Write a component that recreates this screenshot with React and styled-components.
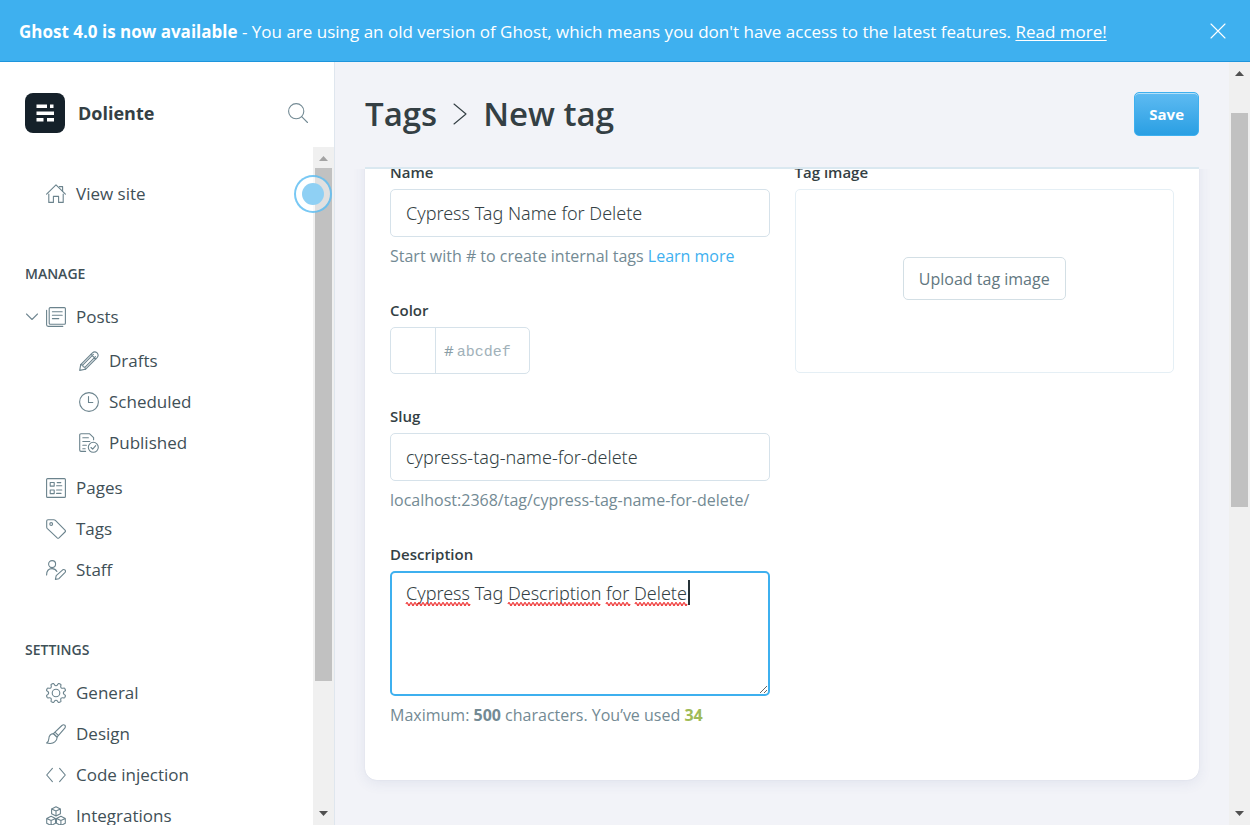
import React, { useLayoutEffect, useRef } from "react";
import styled, { createGlobalStyle, css } from "styled-components";

const color = {
  blue: "#3eb0ef",
  ink: "#343f44",
  text: "#3f5057",
  muted: "#738a94",
  line: "#d6e2ea",
  page: "#f2f3f8",
};

const GlobalStyle = createGlobalStyle`
  *, *::before, *::after { box-sizing: border-box; }
  html, body, #root { height: 100%; }
  body {
    margin: 0;
    overflow: hidden;
    font-family: "Open Sans", "Noto Sans", sans-serif;
    color: ${color.ink};
    background: ${color.page};
  }
  button, input, textarea { font-family: inherit; }
`;

const Shell = styled.div`
  display: flex;
  flex-direction: column;
  height: 100vh;
`;

const Banner = styled.aside`
  display: flex;
  align-items: center;
  justify-content: space-between;
  flex: none;
  height: 62px;
  padding: 0 24px 0 19px;
  background: ${color.blue};
  border-bottom: 1px solid #1e95dc;
  color: #fff;
  font-size: 17px;
  line-height: 24px;

  p { margin: 0; padding-top: 2px; }
  b { font-weight: 700; }
  a { color: inherit; text-underline-offset: 2px; }
`;

const IconButton = styled.button`
  display: flex;
  padding: 0;
  border: 0;
  background: none;
  color: inherit;
  cursor: pointer;
`;

const Body = styled.div`
  display: flex;
  flex: 1;
  min-height: 0;
`;

const Sidebar = styled.nav`
  display: flex;
  flex-direction: column;
  flex: none;
  width: 335px;
  background: #fff;
  border-right: 1px solid #dfe6ee;
`;

const SiteHeader = styled.header`
  display: flex;
  align-items: center;
  flex: none;
  gap: 13px;
  height: 85px;
  padding: 20px 26px 3px 25px;
  color: ${color.muted};
`;

const Logo = styled.svg`
  flex: none;
  width: 40px;
  height: 40px;
`;

const SiteName = styled.strong`
  flex: 1;
  color: ${color.ink};
  font-size: 18px;
  font-weight: 700;
`;

const NavScroller = styled.div`
  position: relative;
  display: flex;
  flex: 1;
  min-height: 0;
`;

const NavContent = styled.div`
  flex: 1;
  min-width: 0;
  overflow: hidden;
  padding: 26px 0 0 25px;
`;

const NavHeading = styled.h2`
  margin: 52px 0 14px;
  color: ${color.text};
  font-size: 14px;
  line-height: 16px;
  font-weight: 600;
  text-transform: uppercase;
`;

const NavList = styled.ul`
  list-style: none;
  margin: 0;
  padding: 0;

  & & {
    padding: 3px 0 4px 33px;
  }
`;

const NavRow = styled.div`
  display: flex;
  align-items: center;
  height: 41px;
`;

const Toggle = styled(IconButton)`
  width: 14px;
  margin-right: -14px;
  color: ${color.muted};
`;

const NavLink = styled.a`
  display: flex;
  align-items: center;
  gap: 10px;
  padding-left: 21px;
  color: ${color.text};
  font-size: 17px;
  line-height: 24px;
  text-decoration: none;

  svg { color: #6b838d; }
`;

const Icon = styled.svg`
  flex: none;
  width: ${(p) => p.$size || 20}px;
  height: ${(p) => p.$height || p.$size || 20}px;
  fill: none;
  stroke: currentColor;
  stroke-width: 1.1;
  stroke-linecap: round;
  stroke-linejoin: round;
`;

const Track = styled.div`
  display: flex;
  flex-direction: column;
  flex: none;
  width: 21px;
  padding: 0 2px;
  background: #f0f0f0;
`;

const Arrow = styled.svg`
  flex: none;
  width: 17px;
  height: 21px;
  fill: ${(p) => (p.$dim ? "#a3a3a3" : "#505050")};
`;

const Thumb = styled.div`
  flex: ${(p) => p.$size};
  background: #c1c1c1;
`;

const Gap = styled.div`
  flex: ${(p) => p.$size};
`;

const ClickMarker = styled.span`
  position: absolute;
  top: 28px;
  right: 2px;
  width: 38px;
  height: 38px;
  border: 2px solid rgba(62, 176, 239, 0.7);
  border-radius: 50%;
  background: rgba(255, 255, 255, 0.5);

  &::after {
    content: "";
    position: absolute;
    inset: 6px;
    border-radius: 50%;
    background: #8fd0f4;
  }
`;

const Main = styled.main`
  display: flex;
  flex-direction: column;
  flex: 1;
  min-width: 0;
`;

const PageHeader = styled.header`
  display: flex;
  align-items: center;
  justify-content: space-between;
  flex: none;
  height: 107px;
  margin: 0 30px;
  padding-bottom: 2px;
  border-bottom: 2px solid #dae8f0;
`;

const Title = styled.h1`
  display: flex;
  align-items: center;
  gap: 16px;
  margin: 0;
  font-size: 33px;
  line-height: 44px;
  font-weight: 600;

  a { color: inherit; text-decoration: none; }
`;

const SaveButton = styled.button`
  height: 44px;
  padding: 0 14px;
  border: 1px solid ${color.blue};
  border-radius: 5px;
  background: linear-gradient(#5ebbf2, #2a9fe3);
  box-shadow: inset 0 1px 0 #b4e0f9;
  color: #fff;
  font-size: 15px;
  font-weight: 700;
`;

const Scroller = styled.div`
  flex: 1;
  min-height: 0;
  padding: 0 30px;
  overflow-y: auto;
  scrollbar-width: none;
`;

const Card = styled.form`
  display: grid;
  grid-template-columns: 1fr 1fr;
  align-items: start;
  column-gap: 25px;
  padding: 25px 25px 21px;
  margin-bottom: 48px;
  border-radius: 12px;
  background: #fff;
  box-shadow: 0 0 1px rgba(60, 80, 130, 0.2), 0 3px 14px rgba(60, 80, 130, 0.09);
`;

const Field = styled.div`
  margin-bottom: 32px;
`;

const Label = styled.label`
  display: block;
  margin-bottom: 7px;
  font-size: 15px;
  line-height: 20px;
  font-weight: 600;
`;

const Hint = styled.p`
  margin: 8px 0 0;
  padding-bottom: 1px;
  color: ${color.muted};
  font-size: 16px;
  line-height: 22px;

  a { color: ${color.blue}; text-decoration: none; }
`;

const Count = styled.b`
  color: ${(p) => (p.$ok ? "#9fbb58" : "inherit")};
`;

const control = css`
  display: block;
  width: 100%;
  border: 1px solid ${color.line};
  border-radius: 5px;
  background: #fff;
  color: ${color.ink};
  font-family: "Noto Sans", "Open Sans", sans-serif;
  font-size: 18px;
  font-weight: 300;
  outline: 0;
`;

const TextInput = styled.input`
  ${control}
  height: 48px;
  padding: 0 15px;
`;

const TextAreaWrap = styled.div`
  position: relative;
`;

const TextArea = styled.textarea`
  ${control}
  height: 125px;
  padding: 8px 14px;
  border: 2px solid ${color.blue};
  line-height: 25px;
  resize: vertical;
`;

const SpellMarks = styled.svg`
  position: absolute;
  inset: 0;
  width: 100%;
  height: 100%;
  pointer-events: none;
`;

const ColorControl = styled.div`
  display: flex;
  width: 140px;
  height: 47px;
  overflow: hidden;
  border: 1px solid ${color.line};
  border-radius: 5px;
  color: #8a9da6;
  font-size: 15px;
  line-height: 45px;
`;

const Swatch = styled.span`
  width: 45px;
  margin-right: 8px;
  border-right: 1px solid ${color.line};
`;

const ColorInput = styled.input`
  flex: 1;
  min-width: 0;
  padding: 3px 0 0 3px;
  border: 0;
  outline: 0;
  background: none;
  font-family: "Liberation Mono", monospace;
  font-size: 15px;

  &::placeholder { color: #a1b1b9; opacity: 1; }
`;

const ImageDrop = styled.div`
  display: flex;
  align-items: center;
  justify-content: center;
  height: 184px;
  padding-bottom: 5px;
  border: 1px solid #e5eff5;
  border-radius: 5px;
`;

const UploadButton = styled.button`
  height: 43px;
  padding: 0 15px;
  border: 1px solid #d3dfe5;
  border-radius: 5px;
  background: #fff;
  color: #62777f;
  font-size: 16px;
`;

function gearPath() {
  const at = (deg, r) => {
    const a = (deg * Math.PI) / 180;
    return `${(10 + r * Math.cos(a)).toFixed(2)} ${(10 + r * Math.sin(a)).toFixed(2)}`;
  };
  let d = "";
  for (let k = 0; k < 8; k++) {
    const c = 22.5 + 45 * k;
    d += `${k ? "L" : "M"}${at(c - 11, 8.6)}Q${at(c - 10, 9.9)} ${at(c - 5, 9.9)}L${at(c + 5, 9.9)}`;
    d += `Q${at(c + 10, 9.9)} ${at(c + 11, 8.6)}Q${at(c + 22.5, 6.2)} ${at(c + 34, 8.6)}`;
  }
  return `${d}z`;
}

const icons = {
  home: (
    <>
      <path d="M.6 10.2 10 .9l9.400 9.300" />
      <path d="M2.800 10v8.400h4.600v-6h5.200v6h4.600V10" />
      <path d="M13.400 2.600h3.200v4.600" />
    </>
  ),
  posts: (
    <>
      <rect x="3.200" y=".6" width="16.200" height="16.600" rx="1" />
      <path d="M.6 3.200v14.600q0 1.600 1.600 1.600h14.600M6.400 4.800h9.800M6.400 8.200h9.800M6.400 11.600h6.400" />
    </>
  ),
  draft: (
    <>
      <path d="M1.700 13.600 13.400 1.900q2.200-2.100 4.700 0 2.100 2.400 0 4.700L6.400 18.300.7 19.400z" />
      <path d="m1.700 13.600 2 .5.5 1.700 1.700.5.5 2M3.700 14.100 14.400 3.400M5.900 16.300 16.500 5.700M12 3.300 16.700 8" />
    </>
  ),
  clock: (
    <>
      <circle cx="10" cy="10" r="9.400" />
      <path d="M9.500 4.500v6h4.300" />
    </>
  ),
  published: (
    <>
      <path d="M6.600 18.400H2q-1.300 0-1.300-1.300V2Q.7.7 2 .7h8.400l4.200 3.900v2.200M3.800 4.800h5.600M3.800 8.500h7M3.800 12.200h3.600M3.800 15.800h2.400" />
      <circle cx="14.300" cy="14.300" r="5" />
      <path d="m12 14.500 1.700 1.700 3-3.600" />
    </>
  ),
  pages: (
    <>
      <rect x=".6" y=".6" width="18.800" height="18.800" rx="1" />
      <path d="M4.200 4.500h4v3.600h-4zM4.200 12h4v3.600h-4zM11.200 4.600h3.600M10.600 7.800h5.200M10.600 12h5.200M10.600 15.400h4.400" />
    </>
  ),
  tag: (
    <>
      <path d="M.7 2v5.900q0 1 .7 1.700l9.800 9.200q.9.8 1.800 0l6-5.800q.9-.9 0-1.800L9.400 1.400Q8.700.7 7.800.7H2Q.7.7.7 2z" />
      <circle cx="5.200" cy="5" r="1.400" />
    </>
  ),
  staff: (
    <>
      <circle cx="6.100" cy="4.100" r="3.500" />
      <path d="M.6 15q0-6.400 5.500-6.400 3.200 0 4.800 2.900M9.400 19.400l.8-3.800 6.500-5.800q1.200-.8 2.300.2 1 1.100.1 2.300l-6.200 6.400z" />
    </>
  ),
  gear: (
    <>
      <circle cx="10" cy="10" r="3.800" />
      <path d={gearPath()} />
    </>
  ),
  brush: (
    <>
      <path d="M7.400 9.600 15.900 1.500q1.500-1.300 2.900-.3 1.100 1.200 0 2.900l-7.800 9z" />
      <path d="m9.200 8.400 3.100 3M7.400 9.600q-1.900.1-3.200 1.400-1.400 1.400-1.400 4.100-.1 2.700-2.200 3.900 5.400 1.300 8.200-1.100 2.600-2.200 2.200-4.800z" />
    </>
  ),
  code: <path d="M6.400 3.400.7 10l5.700 6.600M13.600 3.400l5.700 6.600-5.700 6.600" />,
  blocks: (
    <>
      <path d="m10 .7 4.400 2.200v4.800L10 10 5.600 7.700V2.900zM5.600 2.900 10 5l4.400-2.100M10 5v5" />
      <path d="m5.100 10.300 4.400 2.200v4.800l-4.400 2.200-4.400-2.200v-4.800zM.7 12.500l4.400 2.100 4.400-2.100M5.100 14.600v4.900" />
      <path d="m14.900 10.300 4.400 2.200v4.800l-4.400 2.200-4.400-2.200v-4.800zM10.500 12.500l4.400 2.100 4.400-2.100M14.900 14.600v4.900" />
    </>
  ),
};

function NavItem({ icon, label, toggle, children }) {
  return (
    <li>
      <NavRow>
        {toggle && (
          <Toggle type="button" aria-label="Toggle posts" aria-expanded="true">
            <Icon viewBox="0 0 14 14" $size={14}>
              <path d="m1.500 4 5.500 5.500L12.500 4" />
            </Icon>
          </Toggle>
        )}
        <NavLink href="#">
          <Icon viewBox="0 0 20 20" aria-hidden="true">{icons[icon]}</Icon>
          {label}
        </NavLink>
      </NavRow>
      {children}
    </li>
  );
}

function Scrollbar({ before, thumb, after, dimUp }) {
  return (
    <Track aria-hidden="true">
      <Arrow viewBox="0 0 17 21" $dim={dimUp}>
        <path d="M4 14h9L8.500 9z" />
      </Arrow>
      <Gap $size={before} />
      <Thumb $size={thumb} />
      <Gap $size={after} />
      <Arrow viewBox="0 0 17 21">
        <path d="M4 7h9l-4.500 5z" />
      </Arrow>
    </Track>
  );
}

function wave(x, width) {
  let d = `M${x} 33`;
  for (let i = 0; i < width; i += 4) d += "q1-3 2 0t2 0";
  return d;
}

export default function App() {
  const scroller = useRef(null);

  useLayoutEffect(() => {
    scroller.current.scrollTop = 32;
  }, []);

  return (
    <>
      <GlobalStyle />
      <Shell>
        <Banner>
          <p>
            <b>Ghost 4.0 is now available</b> - You are using an old version of Ghost, which means you
            don't have access to the latest features. <a href="#">Read more!</a>
          </p>
          <IconButton type="button" aria-label="Close">
            <Icon viewBox="0 0 16 16" $size={16}>
              <path d="m1 1 14 14M15 1 1 15" />
            </Icon>
          </IconButton>
        </Banner>

        <Body>
          <Sidebar>
            <SiteHeader>
              <Logo viewBox="0 0 40 40" aria-hidden="true">
                <rect width="40" height="40" rx="8" fill="#15212a" />
                <path
                  fill="#fff"
                  d="M11.500 11.500h10.500v3.500h-10.500zM25 11.500h3.500v3.500H25zM11.500 18.500h17.500v3.500h-17.500zM11.500 25h7v3.500h-7zM22 25h7v3.500h-7z"
                />
              </Logo>
              <SiteName>Doliente</SiteName>
              <IconButton type="button" aria-label="Search">
                <Icon viewBox="0 0 20 20">
                  <circle cx="8.200" cy="8.200" r="7.600" />
                  <path d="m13.700 13.700 5.800 5.800" />
                </Icon>
              </IconButton>
            </SiteHeader>

            <NavScroller>
              <NavContent>
                <NavList>
                  <NavItem icon="home" label="View site" />
                </NavList>
                <NavHeading>Manage</NavHeading>
                <NavList>
                  <NavItem icon="posts" label="Posts" toggle>
                    <NavList>
                      <NavItem icon="draft" label="Drafts" />
                      <NavItem icon="clock" label="Scheduled" />
                      <NavItem icon="published" label="Published" />
                    </NavList>
                  </NavItem>
                  <NavItem icon="pages" label="Pages" />
                  <NavItem icon="tag" label="Tags" />
                  <NavItem icon="staff" label="Staff" />
                </NavList>
                <NavHeading>Settings</NavHeading>
                <NavList>
                  <NavItem icon="gear" label="General" />
                  <NavItem icon="brush" label="Design" />
                  <NavItem icon="code" label="Code injection" />
                  <NavItem icon="blocks" label="Integrations" />
                </NavList>
              </NavContent>
              <Scrollbar before={0} thumb={513} after={123} dimUp />
              <ClickMarker />
            </NavScroller>
          </Sidebar>

          <Main>
            <PageHeader>
              <Title>
                <a href="#">Tags</a>
                <Icon viewBox="0 0 14 22" $size={14} $height={22} aria-hidden="true">
                  <path d="m1 1 12 10L1 21" />
                </Icon>
                New tag
              </Title>
              <SaveButton type="button">Save</SaveButton>
            </PageHeader>

            <Scroller ref={scroller}>
              <Card>
                <div>
                  <Field>
                    <Label htmlFor="tag-name">Name</Label>
                    <TextInput id="tag-name" defaultValue="Cypress Tag Name for Delete" />
                    <Hint>
                      Start with # to create internal tags <a href="#">Learn more</a>
                    </Hint>
                  </Field>
                  <Field>
                    <Label htmlFor="tag-color">Color</Label>
                    <ColorControl>
                      <Swatch />
                      #
                      <ColorInput id="tag-color" placeholder="abcdef" />
                    </ColorControl>
                  </Field>
                  <Field>
                    <Label htmlFor="tag-slug">Slug</Label>
                    <TextInput id="tag-slug" defaultValue="cypress-tag-name-for-delete" />
                    <Hint>localhost:2368/tag/cypress-tag-name-for-delete/</Hint>
                  </Field>
                  <Field>
                    <Label htmlFor="tag-description">Description</Label>
                    <TextAreaWrap>
                      <TextArea
                        id="tag-description"
                        spellCheck={false}
                        defaultValue="Cypress Tag Description for Delete"
                      />
                      <SpellMarks aria-hidden="true">
                        <g fill="none" stroke="#ee2a2a" strokeWidth="1.200">
                          <path d={wave(16, 64)} />
                          <path d={wave(118, 92)} />
                          <path d={wave(216, 24)} />
                          <path d={wave(245, 52)} />
                        </g>
                        <rect x="298" y="9" width="2" height="25" fill="#263238" />
                      </SpellMarks>
                    </TextAreaWrap>
                    <Hint>
                      Maximum: <Count>500</Count> characters. You’ve used <Count $ok>34</Count>
                    </Hint>
                  </Field>
                </div>
                <Field>
                  <Label as="span">Tag image</Label>
                  <ImageDrop>
                    <UploadButton type="button">Upload tag image</UploadButton>
                  </ImageDrop>
                </Field>
              </Card>
            </Scroller>
          </Main>

          <Scrollbar before={30} thumb={394} after={297} />
        </Body>
      </Shell>
    </>
  );
}
